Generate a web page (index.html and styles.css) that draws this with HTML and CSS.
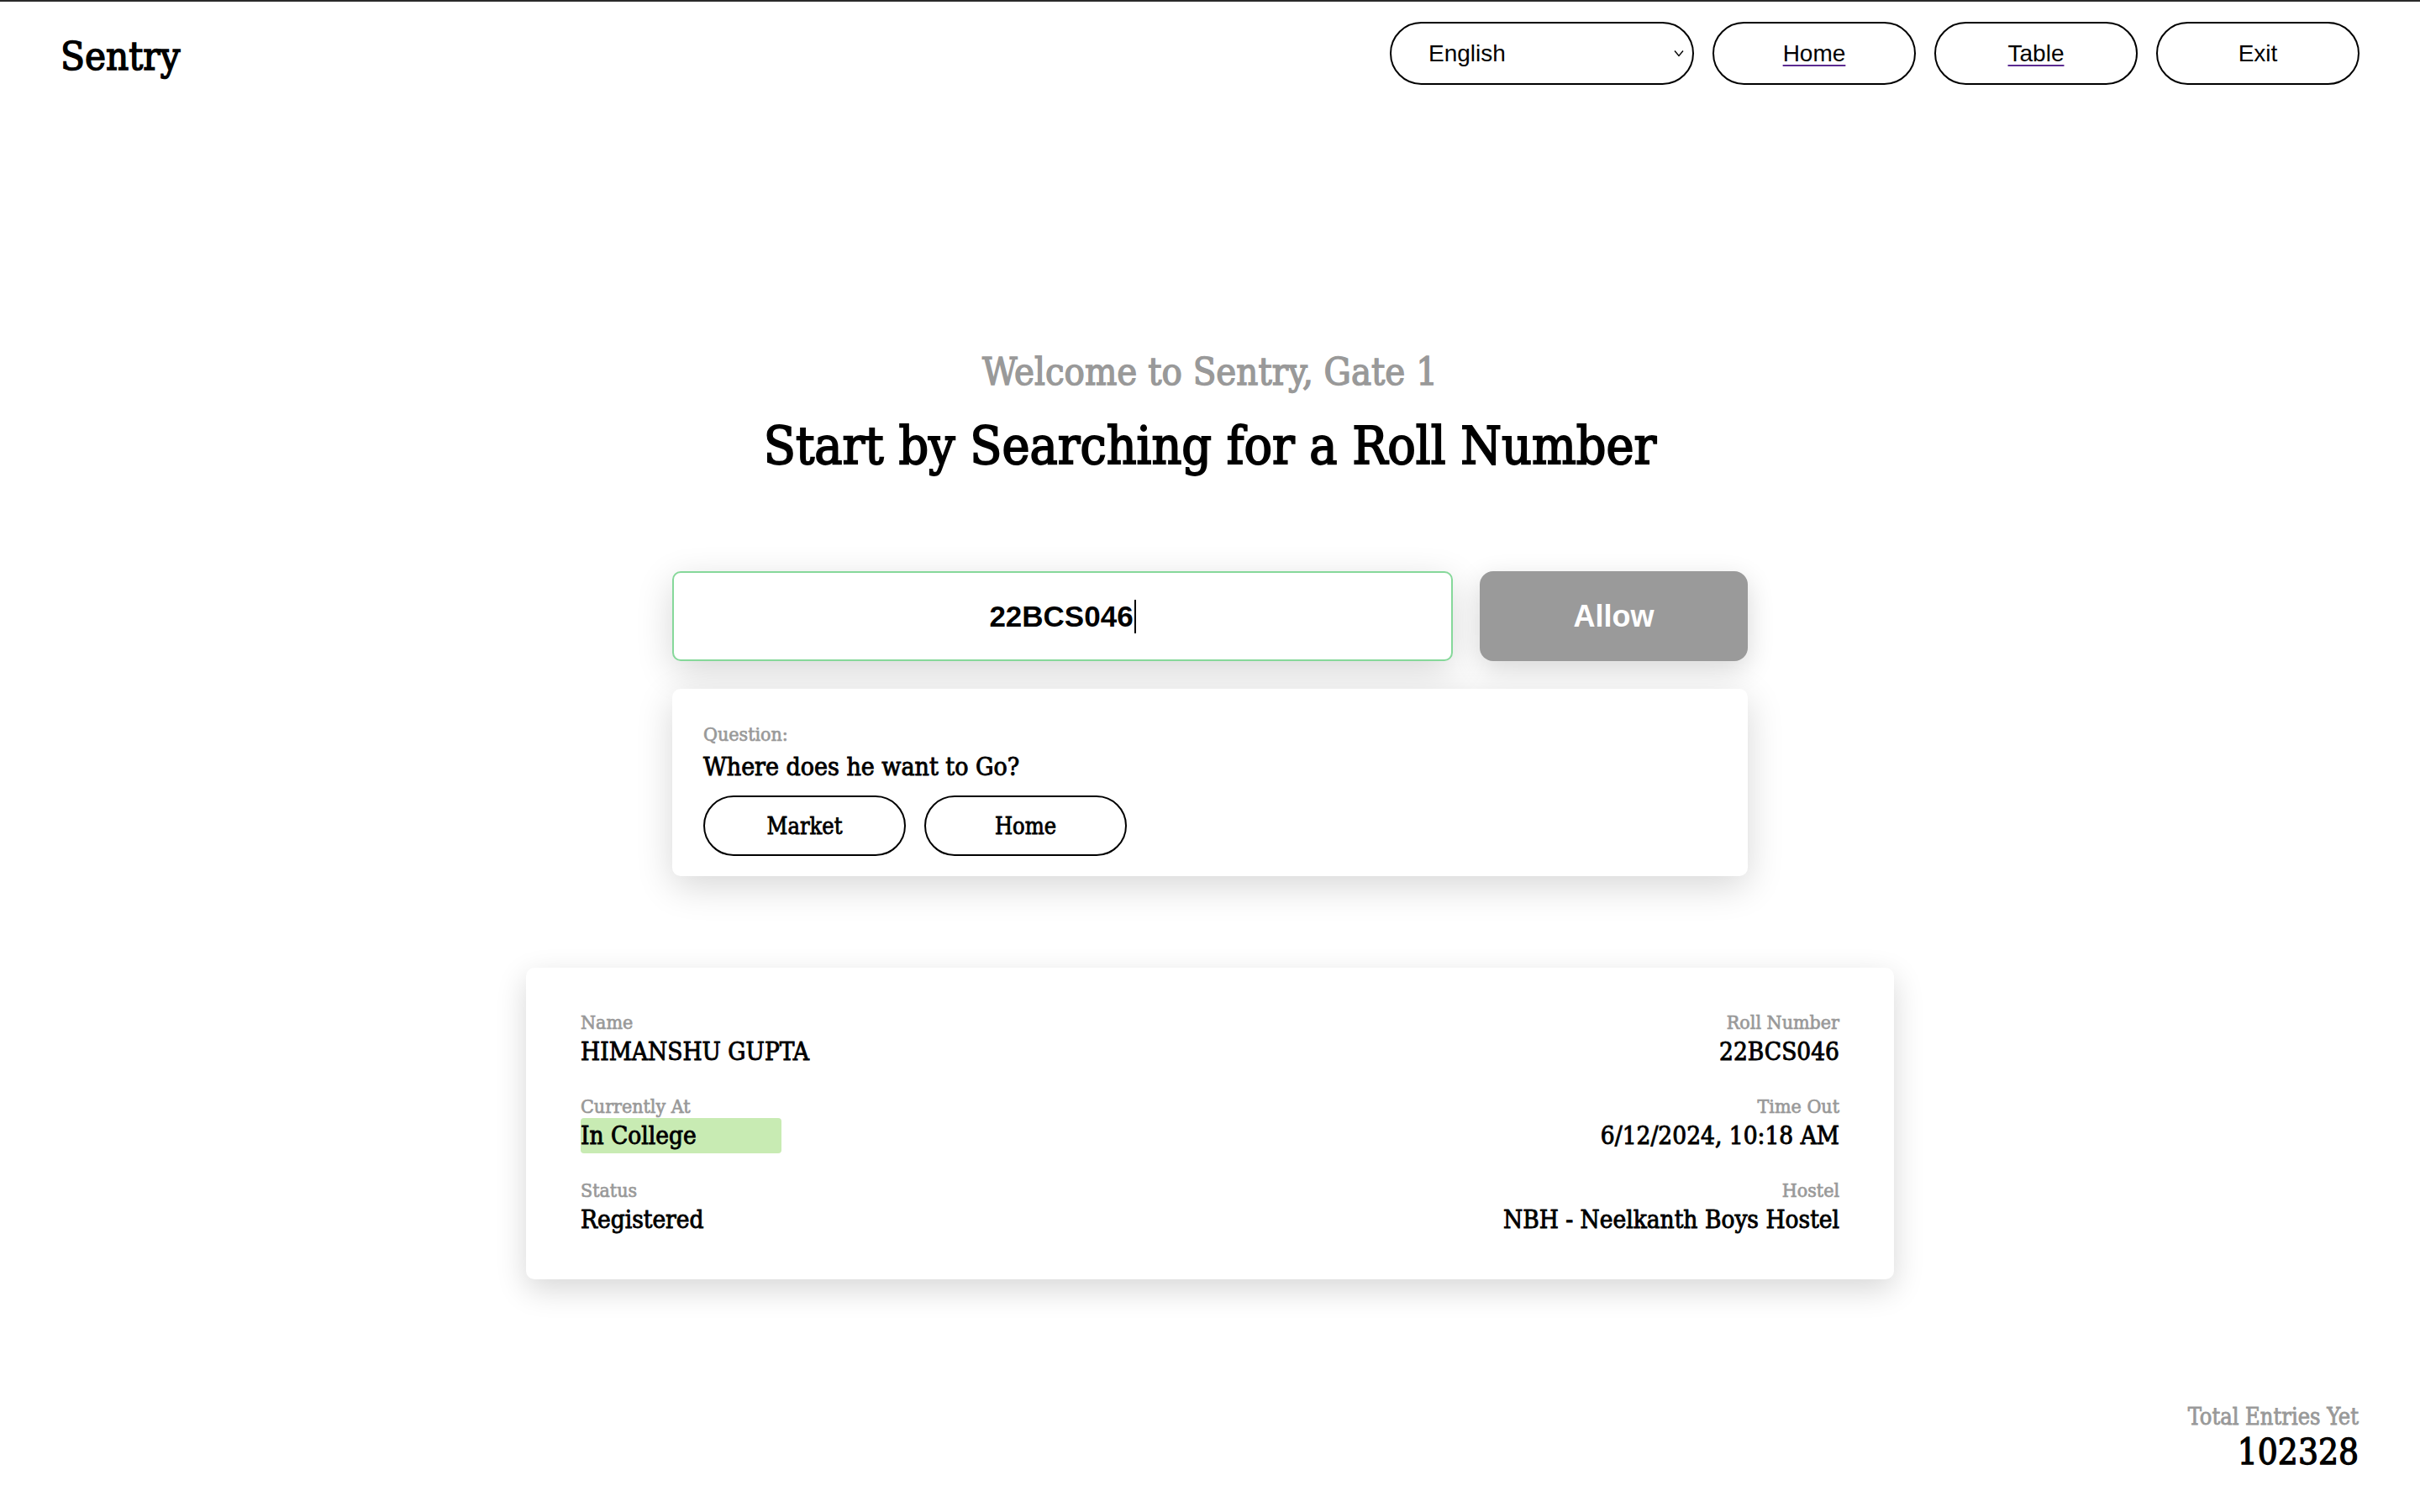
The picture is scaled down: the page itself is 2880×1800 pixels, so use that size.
FILE: index.html
```html
<!DOCTYPE html>
<html lang="en">
<head>
<meta charset="utf-8">
<title>Sentry</title>
<link rel="stylesheet" href="styles.css">
</head>
<body>
<div class="page">
  <header class="topbar">
    <div class="brand serif">Sentry</div>
    <nav class="nav">
      <div class="lang">
        <select class="lang-select" aria-label="Language">
          <option>English</option>
        </select>
        <svg class="chev" width="12" height="9" viewBox="0 0 12 9" aria-hidden="true"><path d="M1 1.5 L6 7.5 L11 1.5" fill="none" stroke="#000" stroke-width="1.4"/></svg>
      </div>
      <a class="pill link" href="#">Home</a>
      <a class="pill link" href="#">Table</a>
      <a class="pill" href="#">Exit</a>
    </nav>
  </header>

  <main class="main">
    <p class="welcome serif">Welcome to Sentry, Gate 1</p>
    <h1 class="title serif">Start by Searching for a Roll Number</h1>

    <section class="search">
      <div class="search-row">
        <div class="search-input"><span class="search-text">22BCS046</span><span class="caret"></span></div>
        <button class="allow" type="button">Allow</button>
      </div>
      <div class="question-card">
        <div class="q-label serif">Question:</div>
        <div class="q-text serif">Where does he want to Go?</div>
        <div class="q-options">
          <button class="opt serif" type="button">Market</button>
          <button class="opt serif" type="button">Home</button>
        </div>
      </div>
    </section>

    <section class="info-card">
      <div class="info-col">
        <div class="field">
          <div class="f-label serif">Name</div>
          <div class="f-value serif">HIMANSHU GUPTA</div>
        </div>
        <div class="field">
          <div class="f-label serif">Currently At</div>
          <div class="f-value serif"><span class="badge">In College</span></div>
        </div>
        <div class="field">
          <div class="f-label serif">Status</div>
          <div class="f-value serif">Registered</div>
        </div>
      </div>
      <div class="info-col right">
        <div class="field">
          <div class="f-label serif">Roll Number</div>
          <div class="f-value serif">22BCS046</div>
        </div>
        <div class="field">
          <div class="f-label serif">Time Out</div>
          <div class="f-value serif">6/12/2024, 10:18 AM</div>
        </div>
        <div class="field">
          <div class="f-label serif">Hostel</div>
          <div class="f-value serif">NBH - Neelkanth Boys Hostel</div>
        </div>
      </div>
    </section>
  </main>

  <footer class="total">
    <div class="total-label serif">Total Entries Yet</div>
    <div class="total-num serif">102328</div>
  </footer>
</div>
</body>
</html>
```

FILE: styles.css
```css
* { box-sizing: border-box; }

html, body {
  margin: 0;
  padding: 0;
  background: #fff;
}

body {
  font-family: "DejaVu Serif Condensed", "DejaVu Serif", serif;
  color: #000;
}

/* slab text: a touch heavier than the regular cut */
.serif {
  font-family: "DejaVu Serif Condensed", "DejaVu Serif", serif;
  -webkit-text-stroke-width: 0.03em;
  -webkit-text-stroke-color: currentColor;
}

.page {
  min-height: 1800px;
  border-top: 2px solid #2a2a2a;
  display: flex;
  flex-direction: column;
}

/* ---------- top bar ---------- */
.topbar {
  display: flex;
  justify-content: space-between;
  align-items: center;
  padding: 24px 72px 0 72px;
}

.brand {
  font-size: 47px;
  line-height: 1;
  margin-top: 5px;
}

.nav {
  display: flex;
  gap: 22px;
  align-items: center;
}

.lang {
  position: relative;
  width: 362px;
  height: 75px;
}

.lang-select {
  appearance: none;
  -webkit-appearance: none;
  width: 100%;
  height: 100%;
  border: 2px solid #000;
  border-radius: 38px;
  background: #fff;
  font-family: "Liberation Sans", Arial, sans-serif;
  font-size: 28px;
  color: #000;
  padding: 0 0 0 44px;
}

.chev {
  position: absolute;
  right: 12px;
  top: 33px;
}

.pill {
  width: 242px;
  height: 75px;
  border: 2px solid #000;
  border-radius: 38px;
  display: flex;
  align-items: center;
  justify-content: center;
  font-family: "Liberation Sans", Arial, sans-serif;
  font-size: 28px;
  color: #000;
  text-decoration: none;
}

.pill.link {
  text-decoration: underline;
  text-decoration-color: #5b2a91;
  text-decoration-thickness: 2px;
  text-underline-offset: 4px;
}

/* ---------- main ---------- */
.main {
  display: flex;
  flex-direction: column;
  align-items: center;
  padding-top: 317px;
}

.welcome {
  margin: 0;
  font-size: 45px;
  line-height: 50px;
  color: #999;
}

.title {
  margin: 26px 0 0 0;
  font-size: 62px;
  font-weight: normal;
  line-height: 74px;
  color: #000;
}

.search {
  width: 1280px;
  margin-top: 112px;
  display: flex;
  flex-direction: column;
  gap: 33px;
}

.search-row {
  display: flex;
  gap: 32px;
}

.search-input {
  flex: 1;
  height: 107px;
  border: 2px solid #86d89a;
  border-radius: 10px;
  background: #fff;
  box-shadow: 0 12px 44px rgba(0, 0, 0, 0.16);
  display: flex;
  align-items: center;
  justify-content: center;
  font-family: "Liberation Sans", Arial, sans-serif;
  font-weight: bold;
  font-size: 35px;
}

.caret {
  display: inline-block;
  width: 2px;
  height: 40px;
  background: #000;
  margin-left: 1px;
}

.allow {
  width: 319px;
  height: 107px;
  border: none;
  border-radius: 16px;
  background: #9a9a9a;
  color: #fff;
  font-family: "Liberation Sans", Arial, sans-serif;
  font-weight: bold;
  font-size: 36px;
  box-shadow: 0 10px 32px rgba(0, 0, 0, 0.16);
}

.question-card {
  background: #fff;
  border-radius: 10px;
  box-shadow: 0 12px 44px rgba(0, 0, 0, 0.16);
  padding: 40px 37px 24px 37px;
}

.q-label {
  font-size: 23px;
  line-height: 28px;
  color: #999;
}

.q-text {
  margin-top: 5px;
  font-size: 30px;
  line-height: 40px;
}

.q-options {
  display: flex;
  gap: 22px;
  margin-top: 14px;
}

.opt {
  width: 241px;
  height: 72px;
  border: 2px solid #000;
  border-radius: 36px;
  background: #fff;
  font-size: 27px;
  color: #000;
}

/* ---------- info card ---------- */
.info-card {
  width: 1628px;
  margin-top: 109px;
  background: #fff;
  border-radius: 10px;
  box-shadow: 0 12px 36px rgba(0, 0, 0, 0.16);
  padding: 51px 65px 50px 65px;
  display: flex;
  justify-content: space-between;
}

.info-col {
  display: flex;
  flex-direction: column;
  gap: 30px;
}

.info-col.right {
  align-items: flex-end;
  text-align: right;
}

.f-label {
  font-size: 23px;
  line-height: 28px;
  color: #999;
}

.f-value {
  font-size: 29.5px;
  line-height: 42px;
}

.badge {
  display: inline-block;
  width: 239px;
  background: #c8ebb3;
  border-radius: 4px;
}

/* ---------- footer ---------- */
.total {
  margin-top: auto;
  align-self: flex-end;
  padding: 0 73px 46px 0;
  text-align: right;
}

.total-label {
  font-size: 27px;
  line-height: 30px;
  color: #999;
}

.total-num {
  margin-top: 2px;
  font-size: 42px;
  line-height: 50px;
}
```
